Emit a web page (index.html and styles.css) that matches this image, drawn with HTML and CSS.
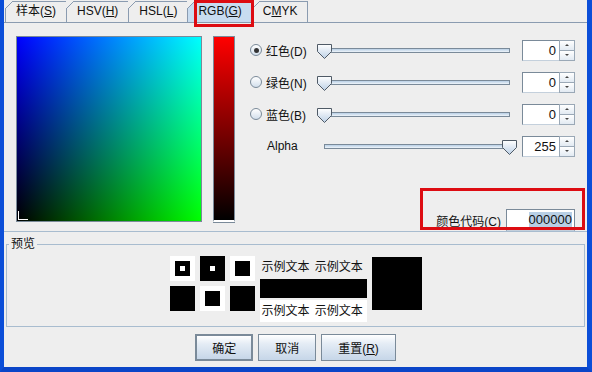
FILE: index.html
```html
<html>
    <head>
        <meta name="viewport" content="width=device-width, initial-scale=1.0">
        <title>颜色选择</title>
        <link rel="stylesheet" href="styles.css">
    </head>
    <body>
        <div class="window">
            <div class="tabs">
                <div class="tab">样本(<u>S</u>)</div>
                <div class="tab">HSV(<u>H</u>)</div>
                <div class="tab">HSL(<u>L</u>)</div>
                <div class="tab active">RGB(<u>G</u>)</div>
                <div class="tab">C<u>M</u>YK</div>
            </div>

            <div class="panel">
                <div class="plane"><span class="plane-marker"></span></div>
                <div class="strip"></div>

                <div class="controls">
                    <div class="row">
                        <span class="radio checked"></span>
                        <span class="label">红色(D)</span>
                        <div class="slider">
                            <div class="track"></div>
                            <svg class="thumb" style="left:0px" width="15" height="15" viewBox="0 0 15 15">
                                <defs><linearGradient id="t1" x1="0" y1="0" x2="0" y2="1"><stop offset="0" stop-color="#ffffff"/><stop offset="1" stop-color="#bcd0e6"/></linearGradient></defs>
                                <path d="M0.5 0.5 H14.5 V7.5 L7.5 14.5 L0.5 7.5 Z" fill="url(#t1)" stroke="#4f5a66"/>
                            </svg>
                        </div>
                        <div class="spinner">
                            <div class="spin-field">0</div>
                            <div class="spin-buttons">
                                <div class="spin-btn"><span class="up"></span></div>
                                <div class="spin-btn"><span class="down"></span></div>
                            </div>
                        </div>
                    </div>
                    <div class="row">
                        <span class="radio"></span>
                        <span class="label">绿色(N)</span>
                        <div class="slider">
                            <div class="track"></div>
                            <svg class="thumb" style="left:0px" width="15" height="15" viewBox="0 0 15 15">
                                <defs><linearGradient id="t2" x1="0" y1="0" x2="0" y2="1"><stop offset="0" stop-color="#ffffff"/><stop offset="1" stop-color="#bcd0e6"/></linearGradient></defs>
                                <path d="M0.5 0.5 H14.5 V7.5 L7.5 14.5 L0.5 7.5 Z" fill="url(#t2)" stroke="#4f5a66"/>
                            </svg>
                        </div>
                        <div class="spinner">
                            <div class="spin-field">0</div>
                            <div class="spin-buttons">
                                <div class="spin-btn"><span class="up"></span></div>
                                <div class="spin-btn"><span class="down"></span></div>
                            </div>
                        </div>
                    </div>
                    <div class="row">
                        <span class="radio"></span>
                        <span class="label">蓝色(B)</span>
                        <div class="slider">
                            <div class="track"></div>
                            <svg class="thumb" style="left:0px" width="15" height="15" viewBox="0 0 15 15">
                                <defs><linearGradient id="t3" x1="0" y1="0" x2="0" y2="1"><stop offset="0" stop-color="#ffffff"/><stop offset="1" stop-color="#bcd0e6"/></linearGradient></defs>
                                <path d="M0.5 0.5 H14.5 V7.5 L7.5 14.5 L0.5 7.5 Z" fill="url(#t3)" stroke="#4f5a66"/>
                            </svg>
                        </div>
                        <div class="spinner">
                            <div class="spin-field">0</div>
                            <div class="spin-buttons">
                                <div class="spin-btn"><span class="up"></span></div>
                                <div class="spin-btn"><span class="down"></span></div>
                            </div>
                        </div>
                    </div>
                    <div class="row">
                        <span class="label alpha-label">Alpha</span>
                        <div class="slider">
                            <div class="track"></div>
                            <svg class="thumb" style="left:185px" width="15" height="15" viewBox="0 0 15 15">
                                <defs><linearGradient id="t4" x1="0" y1="0" x2="0" y2="1"><stop offset="0" stop-color="#ffffff"/><stop offset="1" stop-color="#bcd0e6"/></linearGradient></defs>
                                <path d="M0.5 0.5 H14.5 V7.5 L7.5 14.5 L0.5 7.5 Z" fill="url(#t4)" stroke="#4f5a66"/>
                            </svg>
                        </div>
                        <div class="spinner">
                            <div class="spin-field">255</div>
                            <div class="spin-buttons">
                                <div class="spin-btn"><span class="up"></span></div>
                                <div class="spin-btn"><span class="down"></span></div>
                            </div>
                        </div>
                    </div>

                    <div class="code-row">
                        <span>颜色代码(<u>C</u>)</span>
                        <div class="code-field"><span class="selected">000000</span></div>
                    </div>
                </div>
            </div>

            <fieldset class="preview">
                <legend>预览</legend>
                <div class="preview-body">
                    <div class="swatches">
                        <div class="sw white"><div class="inner black"><div class="dot white"></div></div></div>
                        <div class="sw black"><div class="dot white"></div></div>
                        <div class="sw white"><div class="inner black"></div></div>
                        <div class="sw black"></div>
                        <div class="sw white"><div class="inner black"></div></div>
                        <div class="sw black"></div>
                    </div>
                    <div class="sample">
                        <div class="sample-text">示例文本 示例文本</div>
                        <div class="sample-bar"></div>
                        <div class="sample-text on-white">示例文本 示例文本</div>
                    </div>
                    <div class="big-swatch"></div>
                </div>
            </fieldset>

            <div class="buttons">
                <button class="btn default">确定</button>
                <button class="btn">取消</button>
                <button class="btn">重置(<u>R</u>)</button>
            </div>

            <div class="mark mark-tab"></div>
            <div class="mark mark-code"></div>
        </div>
    </body>
</html>
```

FILE: styles.css
```css
*{
    margin: 0;
    padding: 0;
    box-sizing: border-box;
}
body{
    background-color: #eeeeee;
    font-family: "Liberation Sans", "Noto Sans CJK SC", sans-serif;
    font-size: 12px;
    color: #111;
}
.window{
    position: relative;
    width: 592px;
    height: 372px;
    border-left: 4px solid #0b4ed8;
    border-right: 5px solid #0b4ed8;
    border-bottom: 5px solid #0a45c8;
    display: flex;
    flex-direction: column;
}

/* tabs */
.tabs{
    display: flex;
    height: 22px;
    padding: 1px 0 0 1px;
}
.tab{
    height: 21px;
    line-height: 21px;
    padding: 0 10px 0 11px;
    white-space: nowrap;
    background:
        linear-gradient(#8a9bb0, #8a9bb0) 8px 0 / 100% 1px no-repeat,
        linear-gradient(#8a9bb0, #8a9bb0) 0 8px / 1px 100% no-repeat,
        linear-gradient(135deg, transparent 5.2px, #8a9bb0 5.2px, #8a9bb0 6.3px, #eeeeee 6.3px);
}
.tab.active{
    background:
        linear-gradient(#8a9bb0, #8a9bb0) 8px 0 / 100% 1px no-repeat,
        linear-gradient(#8a9bb0, #8a9bb0) 0 8px / 1px 100% no-repeat,
        linear-gradient(135deg, transparent 5.2px, #8a9bb0 5.2px, #8a9bb0 6.3px, #c8dcf0 6.3px);
}
.tab:last-child{
    border-right: 1px solid #8a9bb0;
}

/* colour panel */
.panel{
    display: flex;
    height: 210px;
    border-top: 1px solid #8a9bb0;
    border-bottom: 1px solid #a8bccf;
    padding: 13px 12px 0 12px;
}
.plane{
    position: relative;
    width: 186px;
    height: 186px;
    border: 1px solid #7a8a99;
    background:
        linear-gradient(to top, #000000, #0000ff),
        linear-gradient(to right, #000000, #00ff00);
    background-blend-mode: screen;
}
.plane-marker{
    position: absolute;
    left: 1px;
    bottom: 1px;
    width: 10px;
    height: 9px;
    border-left: 1px solid #fff;
    border-bottom: 1px solid #fff;
}
.strip{
    width: 22px;
    height: 186px;
    margin-left: 11px;
    border: 1px solid #7a8a99;
    border-bottom: 2px solid #fff;
    box-shadow: 0 1px 0 #7a8a99;
    background: linear-gradient(#ff0000, #000000);
}
.controls{
    width: 325px;
    margin: -2px 0 0 15px;
    display: flex;
    flex-direction: column;
}
.row{
    display: flex;
    align-items: center;
    height: 32px;
}
.radio{
    width: 12px;
    height: 12px;
    margin-right: 4px;
    border: 1px solid #7a8a99;
    border-radius: 50%;
    background: linear-gradient(#ffffff, #d2dfec);
    display: flex;
    align-items: center;
    justify-content: center;
}
.radio.checked::after{
    content: "";
    width: 5px;
    height: 5px;
    border-radius: 50%;
    background: #333;
}
.label{
    width: 51px;
    white-space: nowrap;
}
.alpha-label{
    margin-left: 17px;
    width: 50px;
}
.slider{
    position: relative;
    width: 200px;
    height: 16px;
}
.track{
    height: 5px;
    margin: 6px 7px 0;
    border: 1px solid #7a8a99;
    background: linear-gradient(#b8cfe5, #eef4fa);
}
.thumb{
    position: absolute;
    top: 2px;
}
.spinner{
    display: flex;
    height: 21px;
    margin-left: 5px;
}
.spin-field{
    width: 37px;
    background: #fff;
    border: 1px solid #7a8a99;
    border-right: 0;
    border-bottom-color: #c4d0dc;
    text-align: right;
    padding-right: 3px;
    line-height: 19px;
    font-size: 13px;
}
.spin-buttons{
    width: 16px;
    display: flex;
    flex-direction: column;
}
.spin-btn{
    flex: 1;
    border: 1px solid #9aa8b6;
    background: linear-gradient(#ffffff, #e2eaf2);
    display: flex;
    align-items: center;
    justify-content: center;
}
.spin-btn + .spin-btn{
    border-top: 0;
}
.up{
    border-left: 2px solid transparent;
    border-right: 2px solid transparent;
    border-bottom: 2px solid #444;
}
.down{
    border-left: 2px solid transparent;
    border-right: 2px solid transparent;
    border-top: 2px solid #444;
}
.code-row{
    margin-top: auto;
    display: flex;
    align-items: center;
    justify-content: flex-end;
    gap: 5px;
    height: 22px;
}
.code-field{
    width: 69px;
    height: 22px;
    background: #fff;
    border: 1px solid #7a8a99;
    border-bottom-color: #c4d0dc;
    text-align: right;
    padding-right: 2px;
    line-height: 20px;
    font-size: 13px;
}
.selected{
    background: #b8cfe5;
}

/* preview */
.preview{
    margin: 5px 2px 0;
    border: 1px solid #a8bccf;
    padding: 5px 0 4px;
}
.preview legend{
    margin-left: 2px;
    padding: 0 2px;
    line-height: 14px;
}
.preview-body{
    display: flex;
    justify-content: center;
    align-items: flex-start;
}
.swatches{
    display: grid;
    grid-template-columns: repeat(3, 25px);
    grid-auto-rows: 25px;
    gap: 5px;
}
.sw, .inner{
    display: flex;
    align-items: center;
    justify-content: center;
}
.inner{
    width: 15px;
    height: 15px;
}
.dot{
    width: 5px;
    height: 5px;
}
.white{
    background: #fff;
}
.black{
    background: #000;
}
.sample{
    width: 107px;
    margin-left: 5px;
}
.sample-text{
    height: 23px;
    line-height: 23px;
    padding-left: 2px;
    white-space: nowrap;
    word-spacing: 2px;
}
.sample-text.on-white{
    height: 22px;
    margin-top: 2px;
    background: #fff;
}
.sample-bar{
    height: 19px;
    background: #000;
}
.big-swatch{
    width: 50px;
    height: 53px;
    margin: 1px 0 0 5px;
    background: #000;
}

/* buttons */
.buttons{
    display: flex;
    justify-content: center;
    gap: 5px;
    margin-top: 7px;
}
.btn{
    height: 27px;
    padding: 0 16px;
    border: 1px solid #7a8a99;
    background: linear-gradient(#ffffff, #e4ecf5 35%, #c6d6e8);
    font-family: "Liberation Sans", "Noto Sans CJK SC", sans-serif;
    font-size: 12px;
    color: #111;
}
.btn.default{
    border: 2px solid #7a8a99;
    padding: 0 15px;
}

/* red highlight boxes */
.mark{
    position: absolute;
    border: 3px solid #dd0c12;
}
.mark-tab{
    left: 190px;
    top: 0;
    width: 60px;
    height: 27px;
}
.mark-code{
    left: 416px;
    top: 188px;
    width: 165px;
    height: 42px;
}
```
